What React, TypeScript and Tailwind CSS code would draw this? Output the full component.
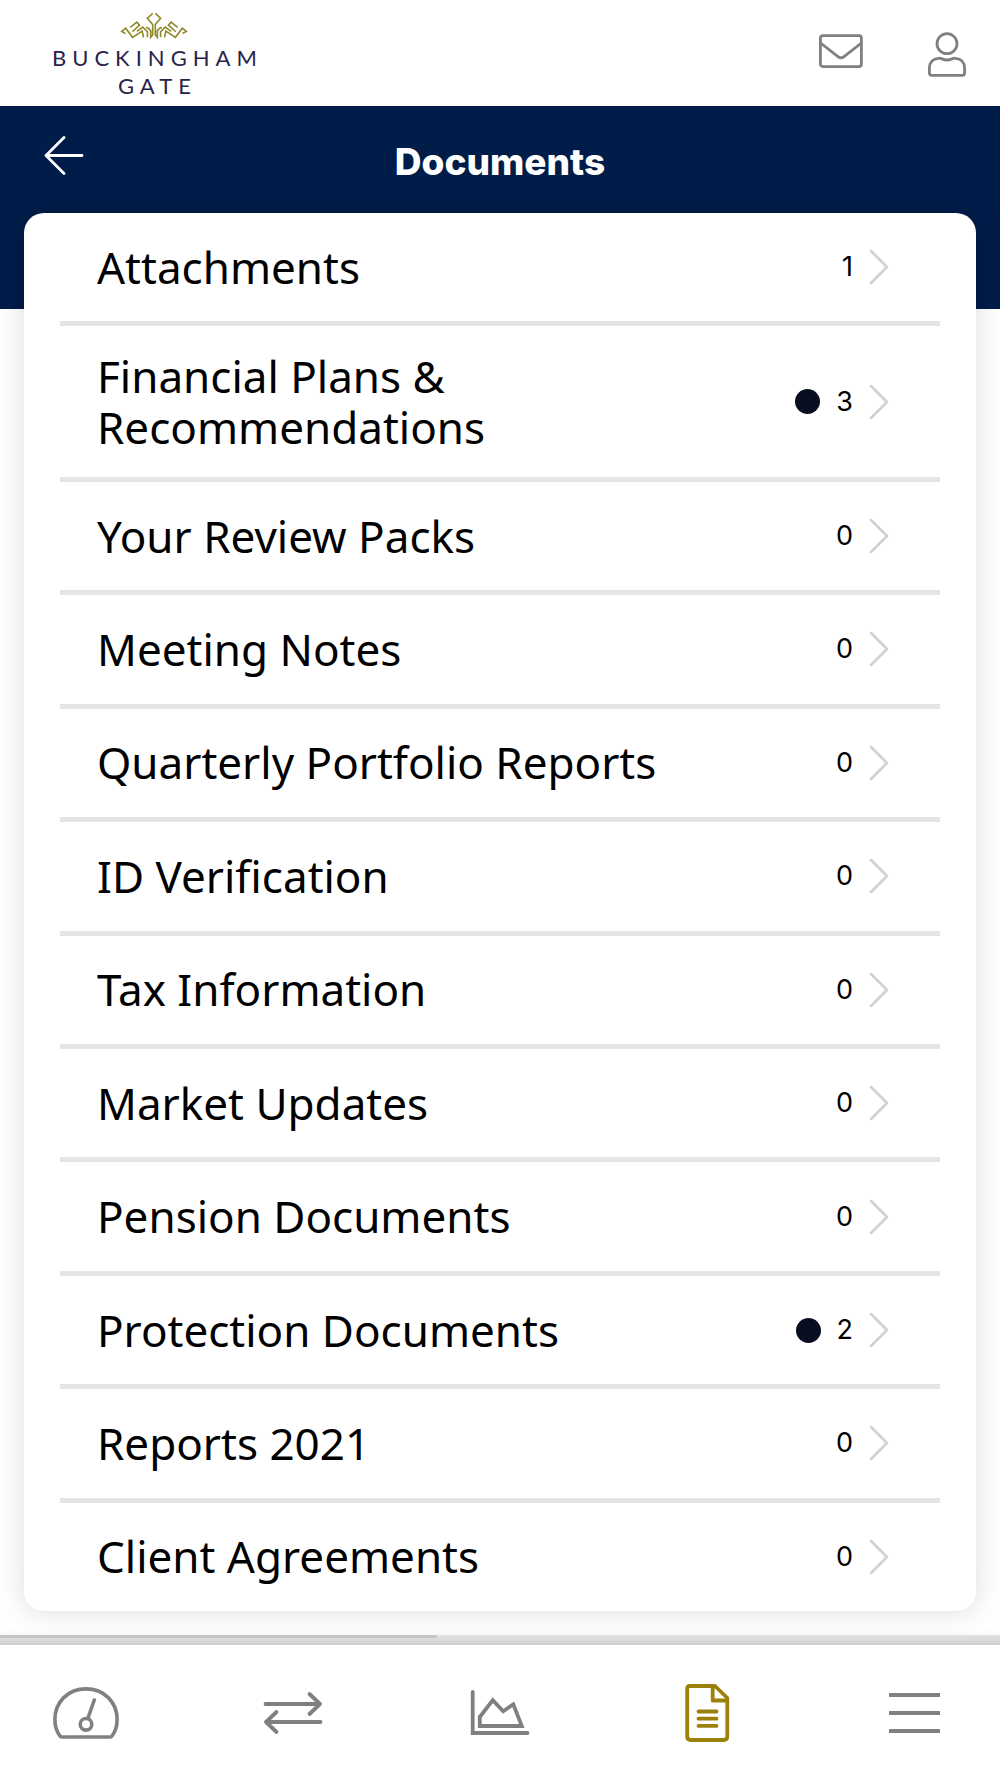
import type { ReactNode } from "react";

type Folder = { name: string; count: number; unread?: boolean };

const folders: Folder[] = [
  { name: "Attachments", count: 1 },
  { name: "Financial Plans & Recommendations", count: 3, unread: true },
  { name: "Your Review Packs", count: 0 },
  { name: "Meeting Notes", count: 0 },
  { name: "Quarterly Portfolio Reports", count: 0 },
  { name: "ID Verification", count: 0 },
  { name: "Tax Information", count: 0 },
  { name: "Market Updates", count: 0 },
  { name: "Pension Documents", count: 0 },
  { name: "Protection Documents", count: 2, unread: true },
  { name: "Reports 2021", count: 0 },
  { name: "Client Agreements", count: 0 },
];

function CrownHalf() {
  return (
    <>
      <path d="M15 65 L4 59 L16 49 L37 77 L66 58 L70 77" />
      <path d="M30 47 L50 31 L58 40 L36 60" />
      <path d="M50 59 L68 46 L82 60 V77" />
      <path d="M78 46 L86 50 L92 58 V77 L98 70 V38 L82 19 L98 4" />
    </>
  );
}

function Logo() {
  return (
    <a href="#home" aria-label="Buckingham Gate" className="flex flex-col items-center">
      <svg viewBox="0 0 204 82" className="h-[27px] w-[68px]" fill="none" stroke="#918a2b" strokeWidth="5">
        <CrownHalf />
        <g transform="translate(204 0) scale(-1 1)">
          <CrownHalf />
        </g>
      </svg>
      <span className="mt-[5px] flex flex-col items-center pl-1.5 font-['Lato',sans-serif] text-[22px] leading-7 tracking-[6px] text-[#2a2348]">
        <span>BUCKINGHAM</span>
        <span>GATE</span>
      </span>
    </a>
  );
}

function MailIcon() {
  return (
    <svg viewBox="0 0 44 34" className="h-[34px] w-11" fill="none" stroke="#808080" strokeWidth="2.8" strokeLinejoin="round">
      <rect x="1.4" y="1.6" width="41" height="31" rx="2.5" />
      <path d="M1.6 9 L19 22.6 Q22 25 25 22.6 L42.4 9" />
    </svg>
  );
}

function UserIcon() {
  return (
    <svg viewBox="0 0 40 45" className="h-[45px] w-10" fill="none" stroke="#808080" strokeWidth="2.8">
      <circle cx="20" cy="11.7" r="10" />
      <path d="M11.5 26.3 C14 25.6 15.5 28 20 28 S26 25.6 28.5 26.3 C34.5 26.8 37.6 31 37.6 36 V41 Q37.6 43.4 35.2 43.4 H4.8 Q2.4 43.4 2.4 41 V36 C2.4 31 5.5 26.8 11.5 26.3 Z" />
    </svg>
  );
}

function BackIcon() {
  return (
    <svg viewBox="0 0 40 39" className="h-[39px] w-10" fill="none" stroke="#fff" strokeWidth="2.8" strokeLinecap="round" strokeLinejoin="round">
      <path d="M20 1.5 L2 19.5 L20 37.5 M2 19.5 H38" />
    </svg>
  );
}

function ChevronIcon() {
  return (
    <svg viewBox="0 0 20 36" className="h-9 w-5 shrink-0" fill="none" stroke="#d2d2d2" strokeWidth="2.8" strokeLinecap="round" strokeLinejoin="round">
      <path d="M2 2 L18 18 L2 34" />
    </svg>
  );
}

const tabIcon = "h-[60px] w-[66px]";

const tabs: { label: string; active?: boolean; icon: ReactNode }[] = [
  {
    label: "Dashboard",
    icon: (
      <svg viewBox="0 0 66 60" className={tabIcon} fill="none" stroke="#808080" strokeWidth="3.6" strokeLinecap="round" strokeLinejoin="round">
        <path d="M7 54 C3.5 49.5 1.9 44 1.9 37.5 C1.9 20 15 6.9 33 6.9 S64.1 20 64.1 37.5 C64.1 44 62.5 49.5 59 54 Q58.6 55 57 55 H9 Q7.4 55 7 54 Z" />
        <circle cx="33" cy="42.3" r="5.8" />
        <path d="M35 36 L41.3 18" />
      </svg>
    ),
  },
  {
    label: "Transactions",
    icon: (
      <svg viewBox="0 0 66 60" className={tabIcon} fill="none" stroke="#808080" strokeWidth="3.8" strokeLinecap="round" strokeLinejoin="round">
        <path d="M5.5 22 H60 M49.5 12 L60 22 L49.5 32" />
        <path d="M60.5 40 H6 M16.5 30 L6 40 L16.5 50" />
      </svg>
    ),
  },
  {
    label: "Valuations",
    icon: (
      <svg viewBox="0 0 66 60" className={tabIcon} fill="none" stroke="#808080" strokeWidth="3.8">
        <path d="M5.7 10 V51 H60.5" strokeLinecap="round" />
        <path d="M12.8 44 V35 L25.8 18.2 L36.2 29.2 L46.3 22.3 L54.8 44 Z" />
      </svg>
    ),
  },
  {
    label: "Documents",
    active: true,
    icon: (
      <svg viewBox="0 0 66 60" className={tabIcon} fill="none" stroke="#9b800b" strokeWidth="3.8" strokeLinecap="round" strokeLinejoin="round">
        <path d="M16 4 H41 L53.3 16 V54.5 Q53.3 58 49.5 58 H17 Q13.2 58 13.2 54.5 V7 Q13.2 4 16 4 Z" />
        <path d="M38.7 4.5 V18.5 H53" />
        <path d="M24.5 29.5 H42.5 M24.5 36.7 H42.5 M24.5 43.9 H42.5" />
      </svg>
    ),
  },
  {
    label: "Menu",
    icon: (
      <svg viewBox="0 0 66 60" className={tabIcon} fill="none" stroke="#808080" strokeWidth="4">
        <path d="M8 13 H59 M8 31 H59 M8 49 H59" />
      </svg>
    ),
  },
];

export default function App() {
  return (
    <div className="flex min-h-screen flex-col bg-white font-['Noto_Sans',sans-serif] text-black">
      <header className="flex h-[106px] items-start justify-between pr-[33px] pl-[46px] pt-3">
        <Logo />
        <div className="flex items-center gap-16 pt-5">
          <button type="button" aria-label="Messages" className="-mt-2">
            <MailIcon />
          </button>
          <button type="button" aria-label="Profile">
            <UserIcon />
          </button>
        </div>
      </header>

      <main className="flex grow flex-col bg-[linear-gradient(#001c49,#001c49)] bg-[length:100%_203px] bg-no-repeat">
        <div className="grid h-[107px] grid-cols-[1fr_auto_1fr] items-center px-11 pt-1">
          <button type="button" aria-label="Back" className="-mt-3 justify-self-start">
            <BackIcon />
          </button>
          <h1 className="font-['Inter',sans-serif] text-[37px] leading-10 font-extrabold text-white">Documents</h1>
        </div>

        <ul className="mx-6 mb-6 flex grow flex-col rounded-[20px] bg-white px-9 shadow-[0_0_30px_rgba(0,0,0,0.14)]">
          {folders.map((folder) => (
            <li key={folder.name} className="flex flex-auto flex-col border-b-[5px] border-[#e5e5e5] last:border-b-0">
              <a href="#folder" className="flex min-h-[108px] grow items-center py-6 pr-[51px] pl-[37px]">
                <span className="flex-1 text-[44px] leading-[51px]">
                  <span className="block max-w-[580px]">{folder.name}</span>
                </span>
                <span className="ml-8 flex items-center">
                  {folder.unread && (
                    <span role="img" aria-label="Unread" className="mr-4 size-[25px] rounded-full bg-[#080e20]" />
                  )}
                  <span className="text-right font-['Inter',sans-serif] text-[27px] leading-8">{folder.count}</span>
                  <span className="ml-4">
                    <ChevronIcon />
                  </span>
                </span>
              </a>
            </li>
          ))}
        </ul>
      </main>

      <div className="h-2.5 bg-linear-to-b from-[#e2e2e2] to-[#d0d0d0] shadow-[0_-2px_6px_rgba(0,0,0,0.04)]">
        <div className="h-[3px] w-[437px] max-w-full bg-[#c5c5c5]" />
      </div>

      <nav aria-label="Main" className="flex h-[133px] items-center justify-between bg-white px-[53px]">
        {tabs.map((tab) => (
          <a key={tab.label} href="#tab" aria-label={tab.label} aria-current={tab.active ? "page" : undefined}>
            {tab.icon}
          </a>
        ))}
      </nav>
    </div>
  );
}
